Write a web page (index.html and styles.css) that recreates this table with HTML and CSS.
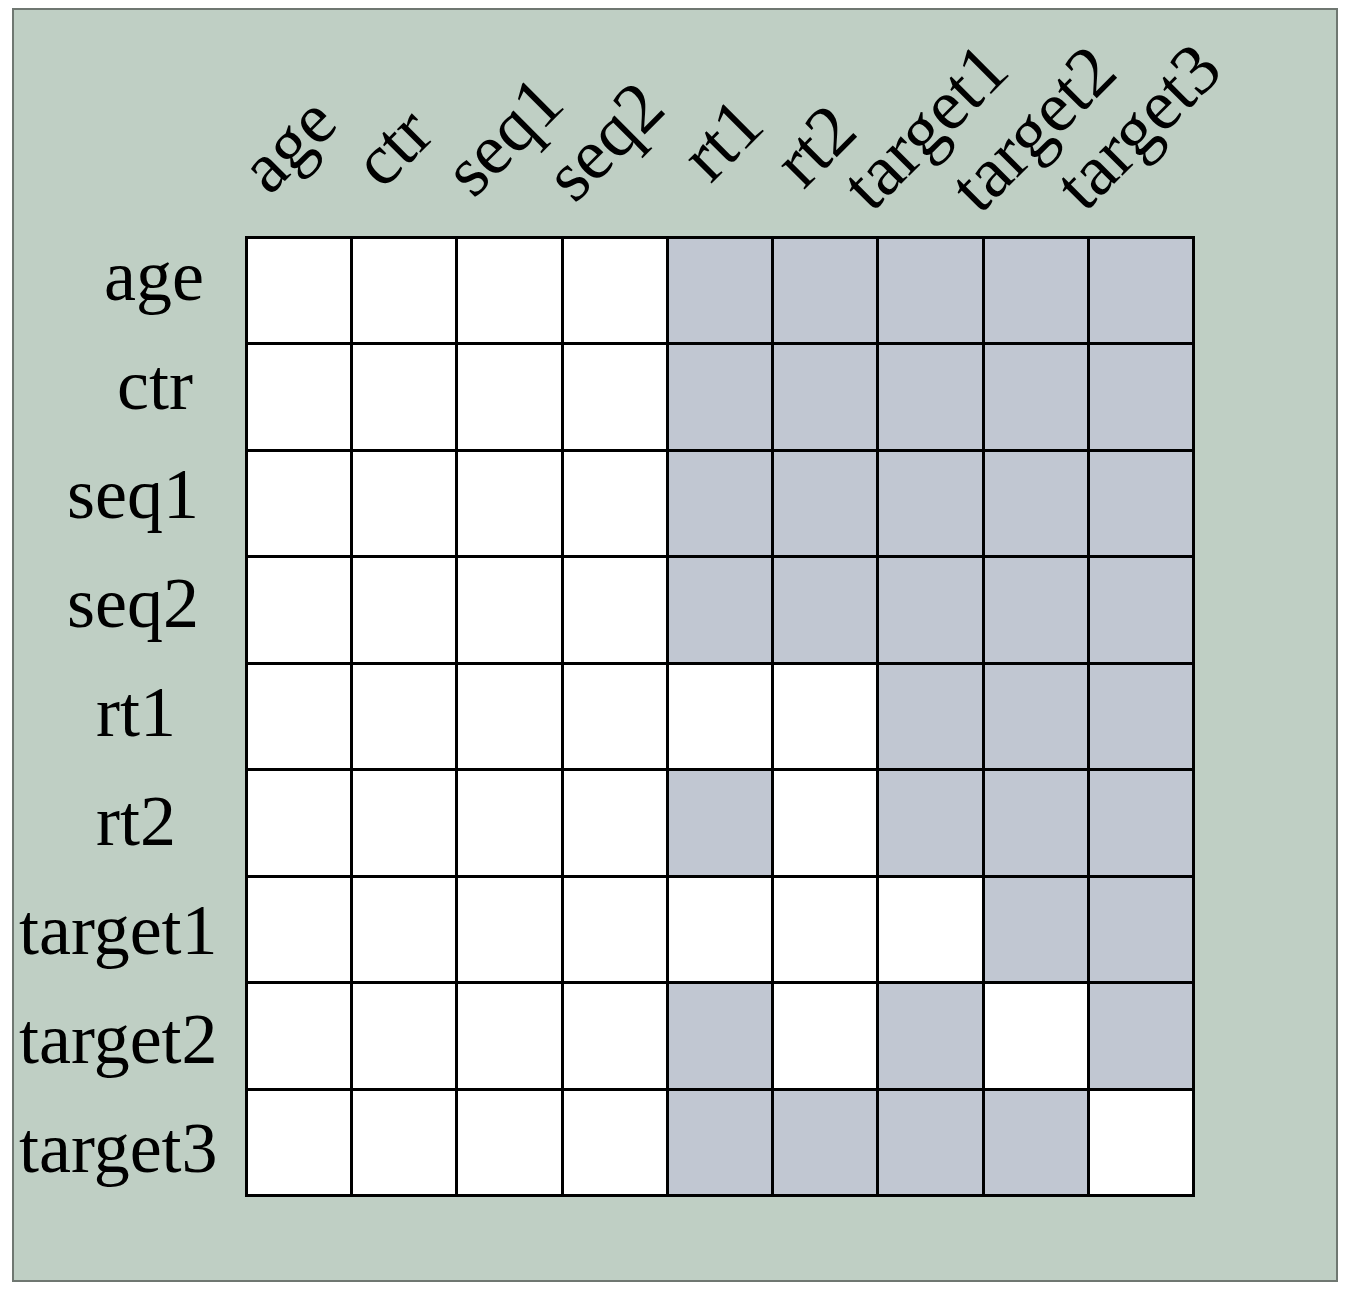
FILE: index.html
```html
<!DOCTYPE html>
<html lang="en">
<head>
<meta charset="utf-8">
<title>Attention mask matrix</title>
<link rel="stylesheet" href="styles.css">
</head>
<body>
<div class="frame">
  <div class="chart">
    <div class="corner"></div>
    <div class="col-heads">
      <div class="ch h-age"><span>age</span></div>
      <div class="ch h-ctr"><span>ctr</span></div>
      <div class="ch h-seq1"><span>seq1</span></div>
      <div class="ch h-seq2"><span>seq2</span></div>
      <div class="ch h-rt1"><span>rt1</span></div>
      <div class="ch h-rt2"><span>rt2</span></div>
      <div class="ch h-t1"><span>target1</span></div>
      <div class="ch h-t2"><span>target2</span></div>
      <div class="ch h-t3"><span>target3</span></div>
    </div>
    <div class="row-heads">
      <div class="rh ind-a1">age</div>
      <div class="rh ind-a2">ctr</div>
      <div class="rh ind-b">seq1</div>
      <div class="rh ind-b">seq2</div>
      <div class="rh ind-c">rt1</div>
      <div class="rh ind-c">rt2</div>
      <div class="rh ind-d">target1</div>
      <div class="rh ind-d">target2</div>
      <div class="rh ind-d">target3</div>
    </div>
    <div class="matrix">
      <div class="cell"></div><div class="cell"></div><div class="cell"></div><div class="cell"></div><div class="cell on"></div><div class="cell on"></div><div class="cell on"></div><div class="cell on"></div><div class="cell on"></div>
      <div class="cell"></div><div class="cell"></div><div class="cell"></div><div class="cell"></div><div class="cell on"></div><div class="cell on"></div><div class="cell on"></div><div class="cell on"></div><div class="cell on"></div>
      <div class="cell"></div><div class="cell"></div><div class="cell"></div><div class="cell"></div><div class="cell on"></div><div class="cell on"></div><div class="cell on"></div><div class="cell on"></div><div class="cell on"></div>
      <div class="cell"></div><div class="cell"></div><div class="cell"></div><div class="cell"></div><div class="cell on"></div><div class="cell on"></div><div class="cell on"></div><div class="cell on"></div><div class="cell on"></div>
      <div class="cell"></div><div class="cell"></div><div class="cell"></div><div class="cell"></div><div class="cell"></div><div class="cell"></div><div class="cell on"></div><div class="cell on"></div><div class="cell on"></div>
      <div class="cell"></div><div class="cell"></div><div class="cell"></div><div class="cell"></div><div class="cell on"></div><div class="cell"></div><div class="cell on"></div><div class="cell on"></div><div class="cell on"></div>
      <div class="cell"></div><div class="cell"></div><div class="cell"></div><div class="cell"></div><div class="cell"></div><div class="cell"></div><div class="cell"></div><div class="cell on"></div><div class="cell on"></div>
      <div class="cell"></div><div class="cell"></div><div class="cell"></div><div class="cell"></div><div class="cell on"></div><div class="cell"></div><div class="cell on"></div><div class="cell"></div><div class="cell on"></div>
      <div class="cell"></div><div class="cell"></div><div class="cell"></div><div class="cell"></div><div class="cell on"></div><div class="cell on"></div><div class="cell on"></div><div class="cell on"></div><div class="cell"></div>
    </div>
  </div>
</div>
</body>
</html>
```

FILE: styles.css
```css
* { box-sizing: border-box; }

html, body {
  margin: 0;
  padding: 0;
  background: #ffffff;
}

body {
  font-family: "Liberation Serif", "Times New Roman", serif;
  color: #000000;
}

.frame {
  margin: 8px 0 0 12px;
  width: 1326px;
  height: 1274px;
  background: #bfcfc4;
  border: 2px solid #6f7771;
  overflow: hidden;
}

.chart {
  display: grid;
  grid-template-columns: 231px 950px;
  grid-template-rows: 226px auto;
}

.col-heads {
  display: grid;
  grid-template-columns: repeat(9, 1fr);
  column-gap: 3px;
  padding: 0 3px;
  height: 226px;
}

.ch {
  display: flex;
  align-items: flex-end;
  min-width: 0;
}

.ch span {
  display: block;
  flex: none;
  font-size: 72px;
  line-height: 1;
  white-space: nowrap;
  transform-origin: 0 100%;
  transform: rotate(-45deg);
  margin-left: var(--dx);
  margin-bottom: var(--dy);
}

.h-age  { --dx: 30px;  --dy: 31px; }
.h-ctr  { --dx: 38px;  --dy: 37px; }
.h-seq1 { --dx: 24px;  --dy: 28px; }
.h-seq2 { --dx: 19px;  --dy: 23px; }
.h-rt1  { --dx: 50px;  --dy: 43px; }
.h-rt2  { --dx: 38px;  --dy: 37px; }
.h-t1   { --dx: 1px;   --dy: 14px; }
.h-t2   { --dx: 3px;   --dy: 12px; }
.h-t3   { --dx: 3px;   --dy: 14px; }

.row-heads {
  display: flex;
  flex-direction: column;
  margin-top: -14px;
}

.rh {
  height: 109px;
  font-size: 72px;
  line-height: 109px;
  white-space: nowrap;
}

.ind-a1 { padding-left: 90px; }
.ind-a2 { padding-left: 103px; }
.ind-b  { padding-left: 53px; }
.ind-c  { padding-left: 82px; }
.ind-d  { padding-left: 5px; }

.matrix {
  display: grid;
  grid-template-columns: repeat(9, 1fr);
  grid-template-rows: repeat(9, 1fr);
  gap: 3px;
  padding: 3px;
  width: 950px;
  height: 961px;
  background: #000000;
}

.cell {
  background: #ffffff;
}

.cell.on {
  background: #c1c7d2;
}
```
